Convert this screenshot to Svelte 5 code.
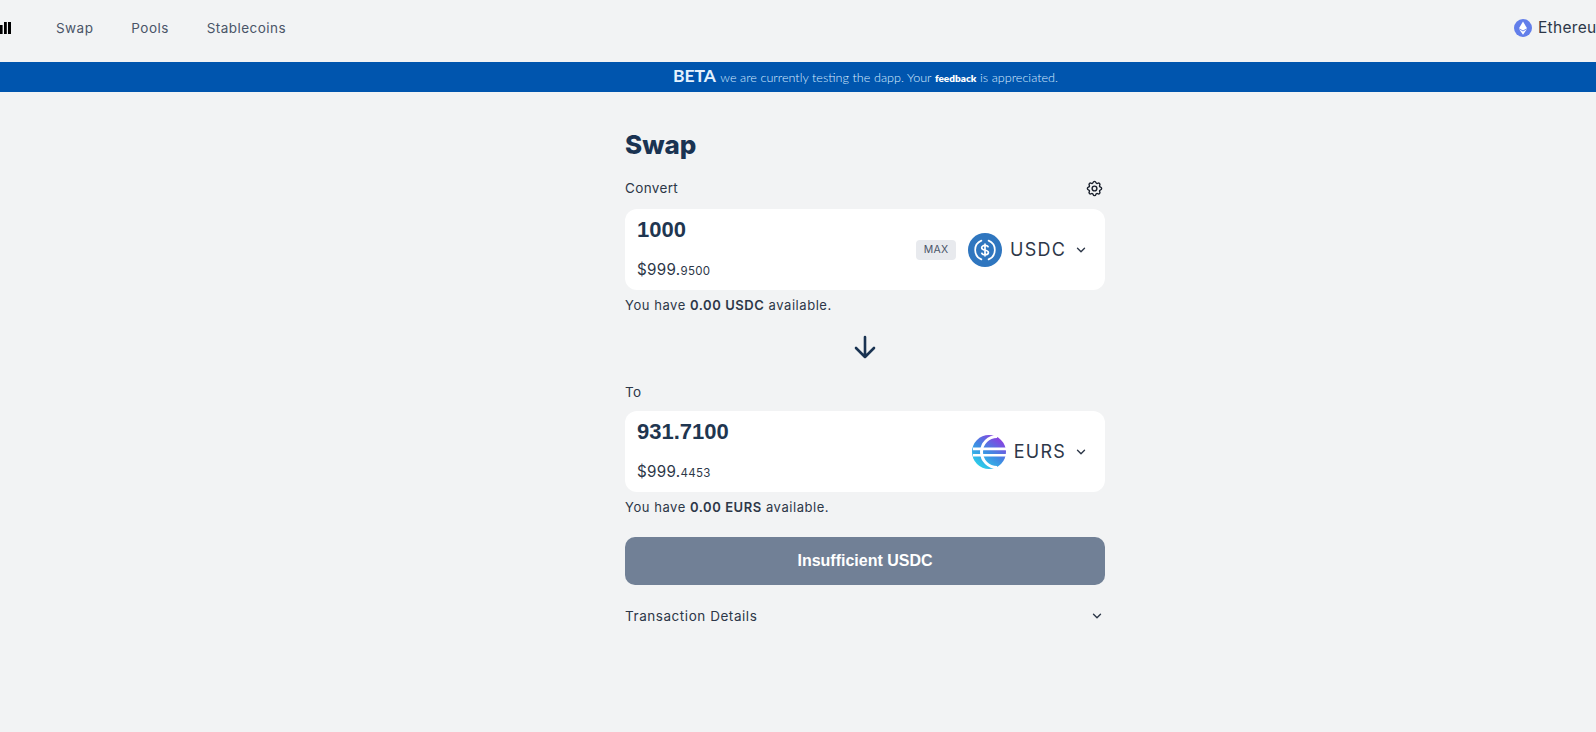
<script>
  const cards = [
    { label: 'Convert', amount: '1000', usd: '$999.', cents: '9500', symbol: 'USDC', max: true, note: 'USDC' },
    { label: 'To', amount: '931.7100', usd: '$999.', cents: '4453', symbol: 'EURS', max: false, note: 'EURS' }
  ];
</script>

{#snippet chevron(cls)}
  <svg class={cls} viewBox="0 0 24 24" fill="none" stroke="currentColor" stroke-width="2.4" stroke-linecap="round" stroke-linejoin="round"><path d="M6 9l6 6 6-6" /></svg>
{/snippet}

{#snippet tokenIcon(symbol)}
  {#if symbol === 'USDC'}
    <svg class="token" viewBox="0 0 34 34">
      <circle cx="17" cy="17" r="17" fill="#2f76bf" />
      <path d="M13.400 7.600a10.200 10.200 0 0 0 0 18.800M20.600 7.600a10.200 10.200 0 0 1 0 18.800" fill="none" stroke="#fff" stroke-width="1.700" stroke-linecap="round" />
      <path d="M20.300 14.400c-.3-1.300-1.600-2-3.300-2-1.900 0-3.300 1-3.300 2.400 0 3.500 6.700 1.500 6.700 4.700 0 1.400-1.400 2.300-3.400 2.300-1.800 0-3.100-.8-3.400-2.200M17 10.400v13.200" fill="none" stroke="#fff" stroke-width="1.700" />
    </svg>
  {:else}
    <svg class="token" viewBox="0 0 34 34">
      <defs>
        <linearGradient id="eurs" x1="0.15" y1="0.9" x2="0.75" y2="0.05">
          <stop offset="0" stop-color="#2bd0ea" />
          <stop offset="0.5" stop-color="#3f8ae2" />
          <stop offset="1" stop-color="#8a3fe0" />
        </linearGradient>
      </defs>
      <circle cx="17" cy="17" r="17" fill="url(#eurs)" />
      <path d="M25 1.500A15.500 15.500 0 0 0 25 32.500" fill="none" stroke="#fff" stroke-width="3" />
      <path d="M1 12.600h33v2.600H1zM1 19h33v2.600H1z" fill="#fff" />
    </svg>
  {/if}
{/snippet}

<div class="page">
  <header class="topbar">
    <div class="left">
      <svg class="logo" viewBox="0 0 11 12" fill="#000"><rect x="0" y="3" width="2.600" height="9" /><rect x="4" y="0" width="2.800" height="12" /><rect x="8" y="0" width="3" height="12" /></svg>
      <nav class="nav">
        <span>Swap</span>
        <span>Pools</span>
        <span>Stablecoins</span>
      </nav>
    </div>
    <div class="network">
      <svg class="eth" viewBox="0 0 18 18">
        <circle cx="9" cy="9" r="9" fill="#627eea" />
        <path d="M9 2.500l-4 6.700 4 2.300 4-2.300z" fill="#fff" />
        <path d="M9 12.500l-4-2.400 4 5.600 4-5.600z" fill="#fff" />
      </svg>
      <span>Ethereum</span>
    </div>
  </header>

  <div class="banner">
    <div class="banner-text">
      <strong class="beta">BETA</strong> we are currently testing the dapp. Your <strong class="fb">feedback</strong> is appreciated.
    </div>
  </div>

  <main class="main">
    <section class="swap">
      <h1>Swap</h1>

      {#each cards as card, i}
        <div class="label-row" class:first={i === 0}>
          <span>{card.label}</span>
          {#if i === 0}
            <svg class="gear" viewBox="0 0 24 24" fill="none" stroke="currentColor" stroke-width="1.800" stroke-linecap="round" stroke-linejoin="round">
              <path d="M10.325 4.317c.426-1.756 2.924-1.756 3.35 0a1.724 1.724 0 002.573 1.066c1.543-.94 3.31.826 2.37 2.37a1.724 1.724 0 001.065 2.572c1.756.426 1.756 2.924 0 3.35a1.724 1.724 0 00-1.066 2.573c.94 1.543-.826 3.31-2.37 2.37a1.724 1.724 0 00-2.572 1.065c-.426 1.756-2.924 1.756-3.35 0a1.724 1.724 0 00-2.573-1.066c-1.543.94-3.31-.826-2.37-2.37a1.724 1.724 0 00-1.065-2.572c-1.756-.426-1.756-2.924 0-3.35a1.724 1.724 0 001.066-2.573c-.94-1.543.826-3.31 2.37-2.37.996.608 2.296.07 2.572-1.065z" />
              <path d="M15 12a3 3 0 11-6 0 3 3 0 016 0z" />
            </svg>
          {/if}
        </div>
        <div class="card">
          <div class="values">
            <div class="amount">{card.amount}</div>
            <div class="usd">{card.usd}<small>{card.cents}</small></div>
          </div>
          <div class="picker">
            {#if card.max}<span class="max">MAX</span>{/if}
            {@render tokenIcon(card.symbol)}
            <span class="symbol">{card.symbol}</span>
            {@render chevron('chev')}
          </div>
        </div>
        <p class="avail">You have <b>0.00 {card.note}</b> available.</p>
        {#if i === 0}
          <div class="arrow">
            <svg viewBox="0 0 24 24" fill="none" stroke="currentColor" stroke-width="2.600" stroke-linecap="round" stroke-linejoin="round"><path d="M12 2v20M3 13l9 9 9-9" /></svg>
          </div>
        {/if}
      {/each}

      <button class="action" disabled>Insufficient USDC</button>

      <div class="details">
        <span>Transaction Details</span>
        {@render chevron('chev')}
      </div>
    </section>
  </main>
</div>

<style>
  :global(body) {
    margin: 0;
    background: #f2f3f4;
    overflow: hidden;
    font-family: Inter, "Noto Sans", sans-serif;
  }
  .page {
    width: 1730px;
    min-height: 732px;
    background: #f2f3f4;
    color: #2d3748;
  }
  .topbar {
    height: 62px;
    box-sizing: border-box;
    padding-bottom: 7px;
    display: flex;
    align-items: center;
    justify-content: space-between;
  }
  .left {
    display: flex;
    align-items: center;
  }
  .logo {
    width: 11px;
    height: 12px;
  }
  .nav {
    display: flex;
    gap: 38px;
    margin-left: 45px;
    font-size: 13.500px;
    letter-spacing: 0.45px;
    color: #4a5568;
  }
  .network {
    display: flex;
    align-items: center;
    gap: 6px;
    margin-left: auto;
    margin-right: 125px;
    font-size: 15.500px;
    letter-spacing: 0.3px;
    color: #2d3748;
    width: 91px;
    white-space: nowrap;
  }
  .eth {
    width: 18px;
    height: 18px;
    flex: none;
  }
  .banner {
    height: 30px;
    background: #0055ae;
    display: flex;
    align-items: center;
    width: 100%;
    padding-bottom: 4px;
    box-sizing: border-box;
  }
  .banner-text {
    margin-left: 673px;
    color: #d8ebff;
    font-family: Lato, sans-serif;
    font-weight: 300;
    font-size: 12.600px;
    word-spacing: 0.2px;
    white-space: nowrap;
  }
  .beta {
    font-weight: 700;
    font-size: 17.500px;
    color: #e4f1fd;
    margin-right: 1px;
  }
  .fb {
    font-weight: 800;
    font-size: 10px;
    color: #fff;
  }
  .main {
    display: flex;
    justify-content: center;
  }
  .swap {
    width: 480px;
  }
  h1 {
    margin: 38px 0 0;
    font-size: 26px;
    line-height: 30px;
    font-weight: 800;
    color: #1a3352;
  }
  .label-row {
    height: 20px;
    margin-top: 23px;
    margin-bottom: 9px;
    display: flex;
    align-items: center;
    justify-content: space-between;
    font-size: 13.500px;
    letter-spacing: 0.35px;
    color: #2d3748;
  }
  .label-row.first {
    margin-top: 18px;
    margin-bottom: 11px;
  }
  .gear {
    width: 19px;
    height: 19px;
    margin-right: 1px;
    color: #1a202c;
  }
  .card {
    height: 81px;
    background: #fff;
    border-radius: 12px;
    display: flex;
    justify-content: space-between;
    align-items: center;
    padding: 0 17px 0 12px;
    box-sizing: border-box;
  }
  .values {
    align-self: stretch;
    display: flex;
    flex-direction: column;
    justify-content: space-between;
    padding: 8px 0 8px;
  }
  .amount {
    font-family: "Liberation Sans", Arial, sans-serif;
    font-weight: 700;
    font-size: 22px;
    line-height: 26px;
    color: #1f3650;
  }
  .usd {
    font-size: 15.200px;
    line-height: 22px;
    color: #2d3748;
    letter-spacing: 0.3px;
  }
  .usd small {
    font-size: 11.500px;
  }
  .picker {
    display: flex;
    align-items: center;
  }
  .max {
    width: 40px;
    height: 20px;
    line-height: 20px;
    text-align: center;
    background: #e8eaee;
    border-radius: 4px;
    font-size: 10.500px;
    letter-spacing: 0.3px;
    color: #4a5568;
    margin-right: 12px;
  }
  .token {
    width: 34px;
    height: 34px;
    flex: none;
  }
  .symbol {
    font-size: 18px;
    letter-spacing: 1.200px;
    color: #2d3748;
    margin-left: 8px;
  }
  .chev {
    width: 14px;
    height: 14px;
    color: #2d3748;
  }
  .picker .chev {
    margin-left: 8px;
  }
  .avail {
    margin: 6px 0 0;
    font-size: 13px;
    line-height: 18px;
    letter-spacing: 0.55px;
    color: #2d3748;
  }
  .avail b {
    font-weight: 600;
  }
  .arrow {
    height: 24px;
    margin-top: 21px;
    display: flex;
    justify-content: center;
    color: #1a3352;
  }
  .arrow svg {
    width: 24px;
    height: 24px;
  }
  .action {
    display: block;
    width: 100%;
    height: 48px;
    margin-top: 21px;
    border: 0;
    border-radius: 10px;
    background: #718096;
    color: #fff;
    font-family: "Liberation Sans", Arial, sans-serif;
    font-weight: 700;
    font-size: 16px;
  }
  .details {
    margin-top: 21px;
    height: 20px;
    display: flex;
    align-items: center;
    justify-content: space-between;
    font-size: 13.500px;
    letter-spacing: 0.55px;
    color: #2d3748;
    padding-right: 1px;
  }
</style>
